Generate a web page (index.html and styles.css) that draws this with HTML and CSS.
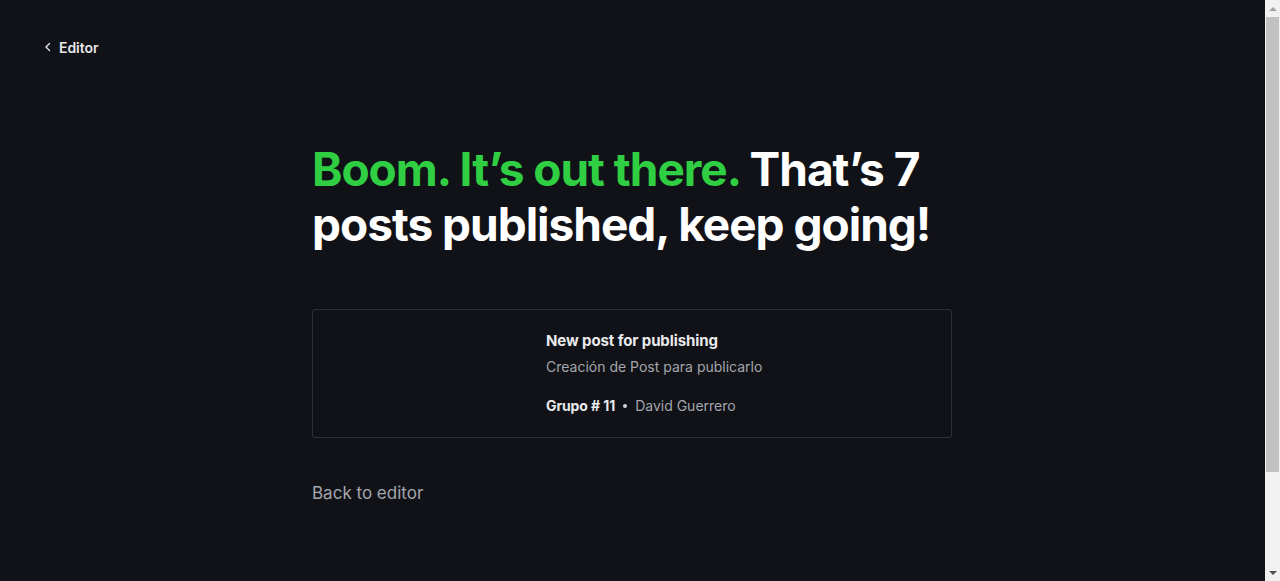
FILE: index.html
```html
<!DOCTYPE html>
<html lang="en">
<head>
<meta charset="utf-8">
<title>Published</title>
<link rel="stylesheet" href="styles.css">
</head>
<body>
<header class="topbar">
  <a class="back-link" href="#">
    <svg class="chev" width="8" height="10" viewBox="0 0 8 10" aria-hidden="true"><path d="M5.5 1.5 2 5l3.5 3.5" fill="none" stroke="currentColor" stroke-width="1.4" stroke-linecap="round" stroke-linejoin="round"/></svg>
    <span>Editor</span>
  </a>
</header>
<main class="main">
  <h1 class="headline"><span class="green">Boom. It’s out there.</span> That’s 7 posts published, keep going!</h1>
  <div class="card">
    <div class="card-image"></div>
    <div class="card-body">
      <div class="card-title">New post for publishing</div>
      <div class="card-excerpt">Creación de Post para publicarlo</div>
      <div class="card-meta"><span class="site">Grupo # 11</span><span class="dot"></span><span class="author">David Guerrero</span></div>
    </div>
  </div>
  <a class="back-editor" href="#">Back to editor</a>
</main>
<div class="fake-scrollbar" aria-hidden="true">
  <div class="sb-arrow up"></div>
  <div class="sb-track"><div class="sb-thumb"></div></div>
  <div class="sb-arrow down"></div>
</div>
</body>
</html>
```
FILE: styles.css
```css
html, body {
  margin: 0;
  padding: 0;
  background: #111217;
}
body {
  font-family: Inter, "Noto Sans", sans-serif;
  color: #fff;
  min-height: 700px;
  padding-right: 16px;
}
a { text-decoration: none; }
.topbar {
  padding: 36px 0 0 44px;
  height: 22px;
}
.back-link {
  display: inline-flex;
  align-items: center;
  gap: 7px;
  color: #e6e7ea;
  font-size: 14px;
  font-weight: 600;
  letter-spacing: -0.05px;
}
.chev { color: #e6e7ea; }
.main {
  width: 640px;
  margin: 0 auto;
  padding-top: 84px;
}
.headline {
  margin: 0;
  font-size: 46px;
  line-height: 55px;
  font-weight: 700;
  letter-spacing: -0.022em;
  color: #fff;
}
.green { color: #30cf43; }
.card {
  margin-top: 57px;
  display: flex;
  border: 1px solid #2e3037;
  border-radius: 3px;
  height: 127px;
}
.card-image {
  width: 233px;
  flex: none;
}
.card-body {
  padding-top: 22px;
  display: flex;
  flex-direction: column;
}
.card-title {
  font-size: 15px;
  font-weight: 700;
  color: #e9eaec;
  line-height: 18px;
  letter-spacing: -0.1px;
}
.card-excerpt {
  margin-top: 8px;
  font-size: 14px;
  color: #a3a6ac;
  line-height: 18px;
}
.card-meta {
  margin-top: 21px;
  display: flex;
  align-items: center;
  font-size: 14px;
  line-height: 18px;
}
.site {
  font-weight: 700;
  color: #e9eaec;
  letter-spacing: -0.1px;
}
.dot {
  width: 4px;
  height: 4px;
  border-radius: 50%;
  background: #d0d2d6;
  margin: 0 8px;
}
.author { color: #a3a6ac; }
.back-editor {
  display: inline-block;
  margin-top: 45px;
  font-size: 17px;
  color: #a3a6ac;
}
.fake-scrollbar {
  position: fixed;
  top: 0;
  right: 0;
  width: 15px;
  height: 100vh;
  background: #f1f1f1;
  display: flex;
  flex-direction: column;
  align-items: center;
}
.sb-arrow {
  height: 17px;
  width: 15px;
  flex: none;
  display: flex;
  align-items: center;
  justify-content: center;
}
.sb-arrow::before {
  content: "";
  border-left: 4px solid transparent;
  border-right: 4px solid transparent;
}
.sb-arrow.up::before { border-bottom: 4px solid #a3a3a3; }
.sb-arrow.down::before { border-top: 4px solid #505050; }
.sb-track {
  flex: 1;
  width: 100%;
  display: flex;
  justify-content: center;
}
.sb-thumb {
  width: 13px;
  height: 455px;
  background: #c1c1c1;
}
```
